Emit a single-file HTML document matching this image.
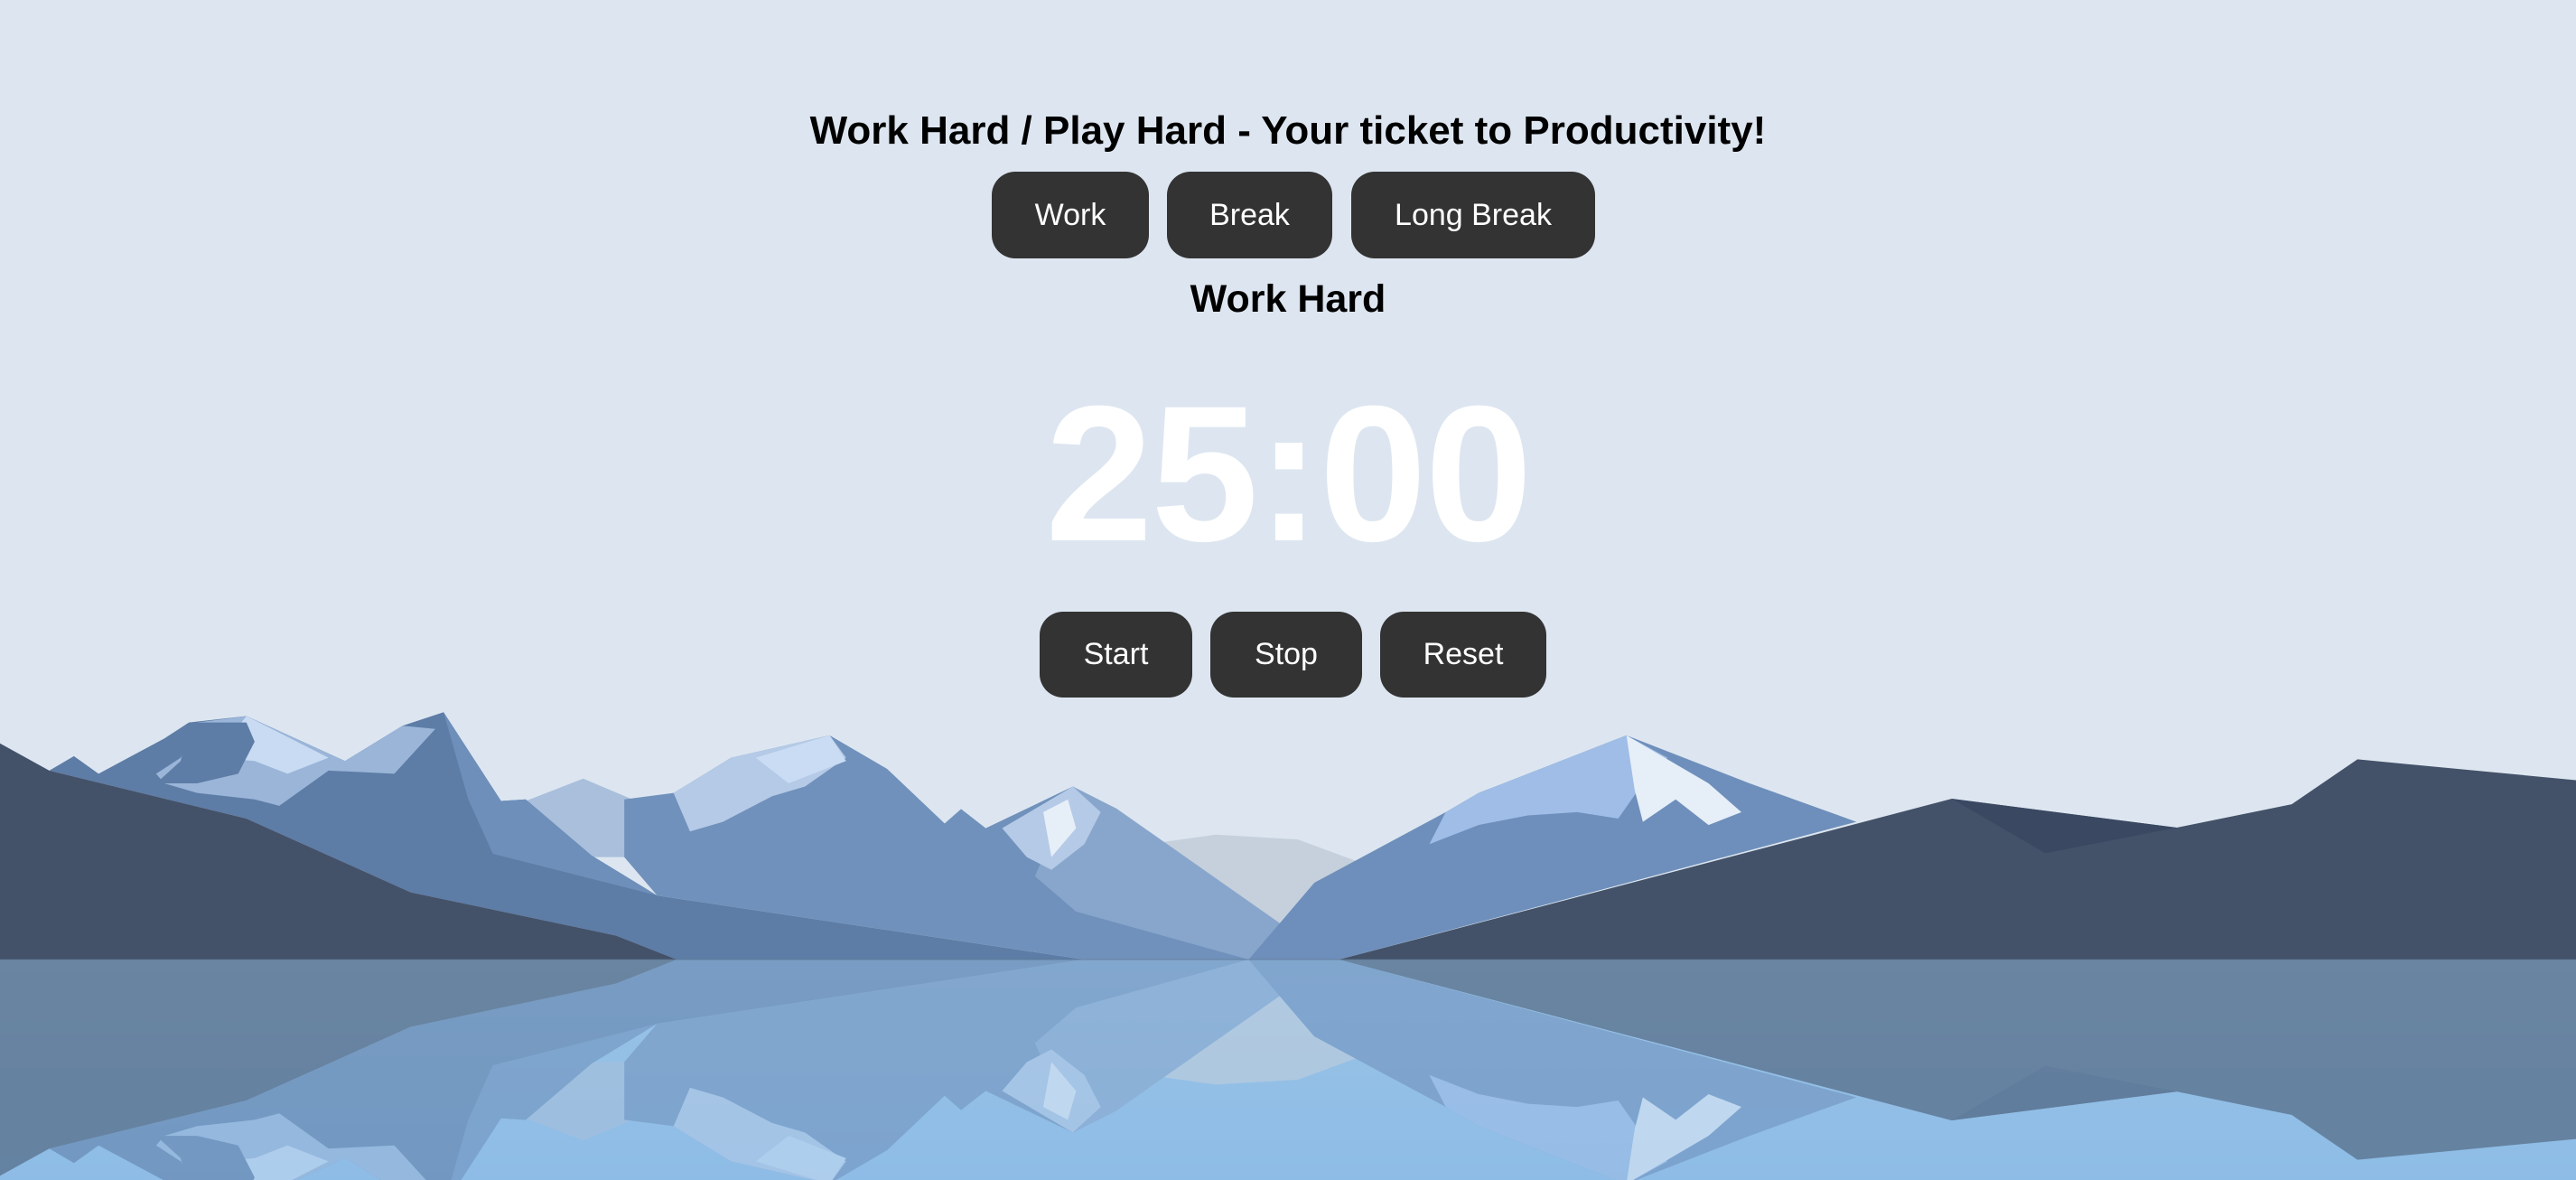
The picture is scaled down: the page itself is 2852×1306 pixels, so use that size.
<!DOCTYPE html>
<html><head><meta charset="utf-8"><style>
html,body{margin:0;padding:0;width:2852px;height:1306px;overflow:hidden;background:#dde6f0;font-family:"Liberation Sans",sans-serif}
.t{position:absolute;left:0;width:2852px;text-align:center;font-weight:bold;color:#000}
.b{position:absolute;background:#333;color:#fff;border-radius:26px;font-size:34px;display:flex;align-items:center;justify-content:center}
svg{position:absolute;left:0;top:750px}
</style></head><body>
<svg width="2852" height="556" viewBox="0 0 1568 1568" preserveAspectRatio="none">
<defs>
<linearGradient id="w" x1="0" y1="0" x2="0" y2="1"><stop offset="0" stop-color="#9ac3e6"/><stop offset="1" stop-color="#8dbce6"/></linearGradient>
<clipPath id="c"><rect x="0" y="880" width="1568" height="700"/></clipPath>
<g id="m">
<polygon fill="#c5d0dc" points="705,515 740,490 790,505 835,590 800,640 778,770 720,560"/>
<polygon fill="#a9bfdb" points="320,385 355,315 385,380 410,360 420,560 360,560"/>
<polygon fill="#5d7ca6" points="30,290 45,245 60,300 100,190 115,140 150,120 210,260 245,150 270,108 305,385 320,380 360,555 400,680 660,880 412,880 375,805 250,670 150,440"/>
<polygon fill="#6d8fba" points="270,108 305,385 320,380 360,555 400,680 300,550 285,380"/>
<polygon fill="#9ab5d8" points="120,140 150,120 210,260 245,150 265,160 240,300 200,290 170,400 155,380 120,360 100,330 95,300 110,250"/>
<polygon fill="#c8dbf2" points="150,120 200,250 175,300 155,260 130,250"/>
<polygon fill="#5d7ca6" points="115,140 150,140 155,200 145,300 120,330 95,330 110,260"/>
<polygon fill="#7091bb" points="380,380 410,360 445,250 505,180 540,285 575,455 585,410 600,470 653,340 680,410 760,880 660,880 400,680 380,560"/>
<polygon fill="#b5cae6" points="410,360 445,250 505,180 515,250 490,340 470,370 440,450 420,480"/>
<polygon fill="#c9dcf4" points="460,250 505,180 515,260 480,330"/>
<polygon fill="#88a6cc" points="630,620 653,340 680,410 780,770 760,880 655,730"/>
<polygon fill="#b5cae6" points="610,470 653,340 670,420 660,520 640,600 625,560"/>
<polygon fill="#e6eef8" points="635,420 650,380 655,470 640,560"/>
<polygon fill="#6e8fbb" points="760,880 800,640 880,420 900,360 960,240 990,180 1065,330 1130,450 815,880"/>
<polygon fill="#9fbde6" points="880,420 900,360 960,240 990,180 1015,250 1000,330 985,440 960,420 930,430 900,460 870,520"/>
<polygon fill="#e6eef8" points="990,180 1010,240 1040,330 1060,420 1040,460 1020,380 1000,450 995,350"/>
<polygon fill="#435269" points="0,205 30,290 150,440 250,670 375,805 412,880 0,880"/>
<polygon fill="#435269" points="815,880 1188,378 1325,468 1395,395 1435,255 1568,320 1568,880"/>
<polygon fill="#3a4862" points="1188,378 1325,468 1245,548"/>
</g>
</defs>
<rect x="0" y="880" width="1568" height="700" fill="url(#w)"/>
<use href="#m"/>
<g clip-path="url(#c)" opacity="0.55"><use href="#m" transform="matrix(1 0 0 -1 0 1760)"/></g>
<rect x="0" y="878" width="1568" height="4" fill="#5d7590" opacity="0.5"/>
</svg>
<div class="t" style="top:120px;font-size:44px">Work Hard / Play Hard - Your ticket to Productivity!</div>
<div class="b" style="left:1098px;top:190px;width:174px;height:96px">Work</div>
<div class="b" style="left:1292px;top:190px;width:183px;height:96px">Break</div>
<div class="b" style="left:1496px;top:190px;width:270px;height:96px">Long Break</div>
<div class="t" style="top:307px;font-size:43px">Work Hard</div>
<div class="t" style="top:408px;font-size:214px;color:#fff;line-height:1;letter-spacing:-2px;height:240px;padding-top:10px">25:00</div>
<div class="b" style="left:1151px;top:677px;width:169px;height:95px">Start</div>
<div class="b" style="left:1340px;top:677px;width:168px;height:95px">Stop</div>
<div class="b" style="left:1528px;top:677px;width:184px;height:95px">Reset</div>
</body></html>
